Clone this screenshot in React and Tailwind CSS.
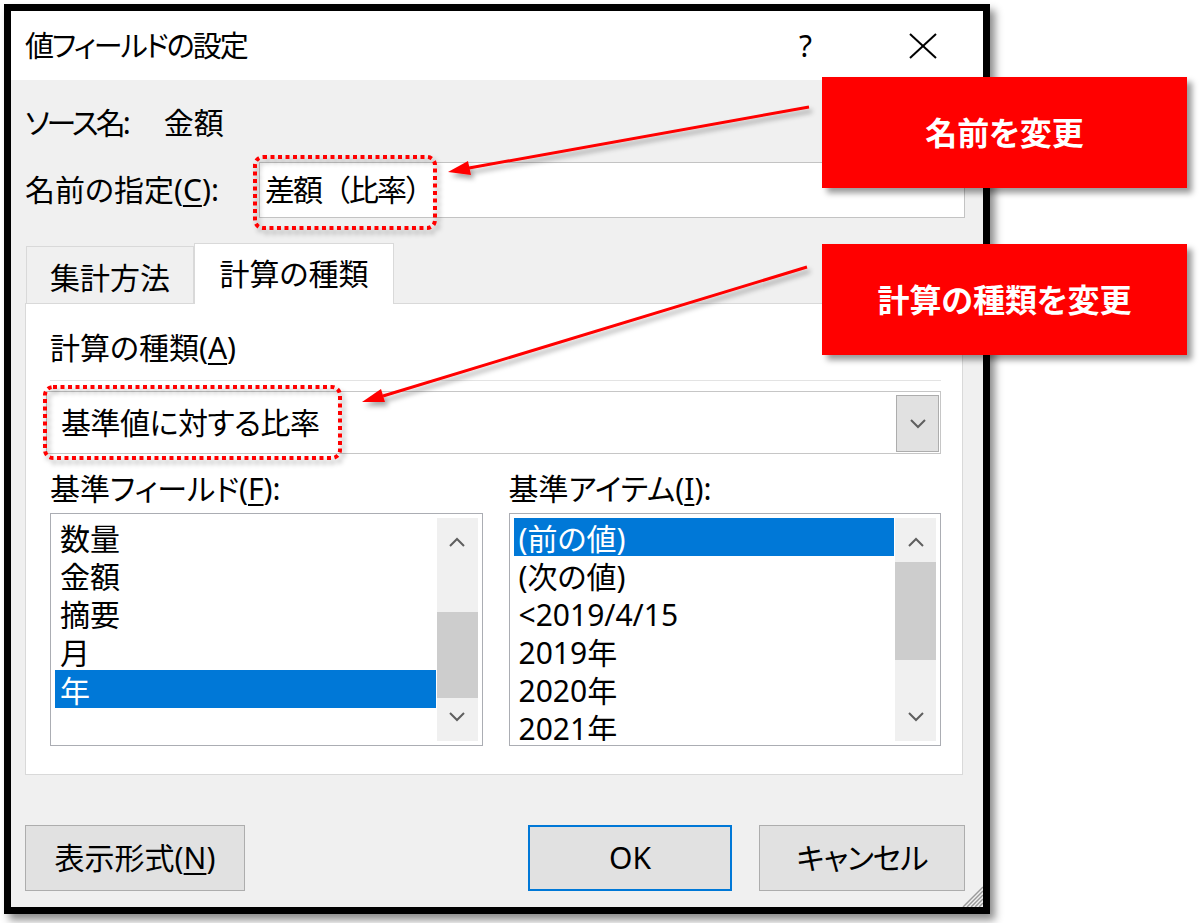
import React from "react";

const FONT = "font-['Noto_Sans','Noto_Sans_CJK_JP',sans-serif] [font-feature-settings:'palt']";

function Chevron({ dir = "down" }) {
  return (
    <svg width="16" height="10" viewBox="0 0 16 10">
      <polyline
        points={dir === "down" ? "1,1 8,8 15,1" : "1,9 8,2 15,9"}
        fill="none"
        stroke="#5f5f5f"
        strokeWidth="2"
      />
    </svg>
  );
}

function U({ children }) {
  return <span className="underline underline-offset-[4px] decoration-[2px]">{children}</span>;
}

function ListBox({ items, selected, thumbTop, thumbHeight }) {
  return (
    <div className="h-[233px] border border-[#abadb3] bg-white p-[4px] flex">
      <div className="flex-1 overflow-hidden mr-px">
        {items.map((it, i) => (
          <div
            key={it}
            className={`h-[38px] shrink-0 pl-[5px] pt-[2px] text-[30px] leading-[38px] whitespace-nowrap ${
              i === selected ? "bg-[#0078d7] text-white" : "text-black"
            }`}
          >
            {it}
          </div>
        ))}
      </div>
      <div className="w-[41px] bg-[#f0f0f0] relative flex flex-col justify-between items-center py-[19px]">
        <Chevron dir="up" />
        <Chevron dir="down" />
        <div className="absolute left-0 right-0 bg-[#cdcdcd]" style={{ top: thumbTop, height: thumbHeight }} />
      </div>
    </div>
  );
}

export default function App() {
  return (
    <div className={`relative w-[1200px] h-[923px] bg-white overflow-hidden ${FONT}`}>
      {/* dialog */}
      <div className="ml-[4px] mt-[4px] w-[986px] h-[910px] border-[7px] border-black bg-[#f0f0f0] flex flex-col relative shadow-[5px_6px_8px_rgba(0,0,0,0.45)]">
        <div className="h-[69px] bg-white flex items-center pl-[14px] pr-[46px] shrink-0">
          <span className="text-[29px] leading-none text-black tracking-[-2px]">値フィールドの設定</span>
          <span className="ml-auto mr-[97px] text-[30px] leading-none text-black">?</span>
          <svg width="28" height="26" viewBox="0 0 28 26">
            <line x1="1" y1="1" x2="27" y2="25" stroke="#000" strokeWidth="2" />
            <line x1="27" y1="1" x2="1" y2="25" stroke="#000" strokeWidth="2" />
          </svg>
        </div>

        <div className="flex-1 flex flex-col pl-[14px] pr-[18px] pt-[23px]">
          <div className="h-[40px] flex items-center text-[30px] leading-none text-black">
            <span className="tracking-[-3px]">ソース名:</span>
            <span className="ml-[36px]">金額</span>
          </div>

          <div className="mt-[19px] h-[56px] flex items-center text-[30px] leading-none text-black">
            <span className="w-[234px]">
              名前の指定(<U>C</U>):
            </span>
            <div className="flex-1 h-full bg-white border border-[#c3c3c3] flex items-center pl-[5px] [font-feature-settings:normal] tracking-[-2px]">
              差額（比率）
            </div>
          </div>

          {/* tabs */}
          <div className="mt-[25px] h-[60px] flex items-end text-[30px] leading-none text-black">
            <div className="ml-px w-[168px] h-[57px] border border-b-0 border-[#d9d9d9] flex items-center justify-center pt-[5px]">
              集計方法
            </div>
            <div className="relative z-10 -mb-px w-[200px] h-[61px] bg-white border border-b-0 border-[#d9d9d9] flex items-center justify-center">
              計算の種類
            </div>
          </div>

          <div className="mr-[2px] h-[472px] bg-white border border-[#d9d9d9] pl-[24px] pr-[21px] pt-[24px] text-[30px] leading-none text-black">
            <div className="h-[40px] flex items-center">
              計算の種類(<U>A</U>)
            </div>
            <div className="mt-[12px] h-px bg-[#e3e3e3]" />
            <div className="mt-[10px] -ml-[4px] h-[63px] border border-[#c6c6c6] bg-white flex items-center pl-[14px] pr-px">
              <span className="flex-1 tracking-[-0.5px]">基準値に対する比率</span>
              <div className="self-stretch mt-[3px] mb-px w-[43px] bg-[#e1e1e1] border border-[#adadad] flex items-center justify-center">
                <Chevron dir="down" />
              </div>
            </div>

            <div className="mt-[15px] grid grid-cols-2 gap-x-[26px]">
              <div>
                <div className="h-[40px] flex items-center">
                  基準フィールド(<U>F</U>):
                </div>
                <div className="mt-[4px]">
                  <ListBox items={["数量", "金額", "摘要", "月", "年"]} selected={4} thumbTop={94} thumbHeight={86} />
                </div>
              </div>
              <div>
                <div className="h-[40px] flex items-center">
                  基準アイテム(<U>I</U>):
                </div>
                <div className="mt-[4px]">
                  <ListBox
                    items={["(前の値)", "(次の値)", "<2019/4/15", "2019年", "2020年", "2021年"]}
                    selected={0}
                    thumbTop={44}
                    thumbHeight={98}
                  />
                </div>
              </div>
            </div>
          </div>

          <div className="mt-[50px] h-[66px] flex text-[30px] leading-none text-black">
            <button className="w-[220px] h-full bg-[#e1e1e1] border border-[#adadad] flex items-center justify-center">
              表示形式(<U>N</U>)
            </button>
            <button className="ml-auto w-[204px] h-full bg-[#e1e1e1] border-2 border-[#0078d7] flex items-center justify-center">
              OK
            </button>
            <button className="ml-[27px] w-[206px] h-full bg-[#e1e1e1] border border-[#adadad] flex items-center justify-center tracking-[-1px]">
              キャンセル
            </button>
          </div>
        </div>

        {/* resize grip */}
        <svg className="absolute right-0 bottom-0" width="22" height="22" viewBox="0 0 22 22">
          {[4, 8, 12, 16, 20].map((o) => (
            <line key={o} x1={22 - o} y1="22" x2="22" y2={22 - o} stroke="#9a9a9a" strokeWidth="1.5" />
          ))}
        </svg>
      </div>

      {/* callouts */}
      <div className="absolute left-[822px] top-[77px] w-[365px] h-[111px] bg-[#ff0000] flex items-center justify-center text-white font-bold text-[32px] leading-none shadow-[5px_5px_6px_rgba(0,0,0,0.4)]">
        名前を変更
      </div>
      <div className="absolute left-[822px] top-[244px] w-[365px] h-[111px] bg-[#ff0000] flex items-center justify-center text-white font-bold text-[32px] leading-none shadow-[5px_5px_6px_rgba(0,0,0,0.4)]">
        計算の種類を変更
      </div>

      {/* arrows and highlight boxes */}
      <svg className="absolute inset-0 pointer-events-none" width="1200" height="923" viewBox="0 0 1200 923">
        <defs>
          <filter id="sh" x="-10%" y="-10%" width="130%" height="140%">
            <feDropShadow dx="3" dy="4" stdDeviation="2.5" floodColor="#000" floodOpacity="0.35" />
          </filter>
        </defs>
        <g filter="url(#sh)">
          <line x1="809" y1="107" x2="469" y2="168" stroke="#ff0000" strokeWidth="3" />
          <polygon points="448,172 471,175 468,161" fill="#ff0000" />
          <line x1="807" y1="267" x2="383" y2="396" stroke="#ff0000" strokeWidth="3" />
          <polygon points="362,402 385,402 381,389" fill="#ff0000" />
          <rect x="255" y="157" width="180" height="71" rx="8" fill="none" stroke="#ff0000" strokeWidth="4" strokeDasharray="4 3.5" />
          <rect x="45" y="387" width="295" height="71" rx="8" fill="none" stroke="#ff0000" strokeWidth="4" strokeDasharray="4 3.5" />
        </g>
      </svg>
    </div>
  );
}
